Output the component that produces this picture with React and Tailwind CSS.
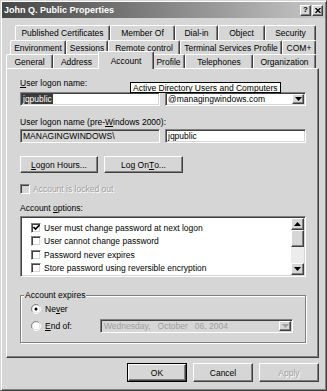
import React from "react";

const raised = "border border-t-white border-l-white border-r-[#404040] border-b-[#404040] shadow-[inset_-1px_-1px_0_#808080]";
const sunken = "border border-t-[#808080] border-l-[#808080] border-r-white border-b-white shadow-[inset_1px_1px_0_#404040,inset_-1px_-1px_0_#d6d6d6]";
const dim = "text-[#a0a0a0] [text-shadow:1px_1px_0_#ffffff]";

const tabRows = [
  {
    cls: "ml-[13px] h-[15px]",
    tabs: [["Published Certificates", "w-[95px]"], ["Member Of", "w-[65px]"], ["Dial-in", "w-[43px]"], ["Object", "w-[47px]"], ["Security", "w-[51px]"]],
  },
  {
    cls: "ml-[8px] h-[14px]",
    tabs: [["Environment", "w-[56px]"], ["Sessions", "w-[42px]"], ["Remote control", "w-[72px]"], ["Terminal Services Profile", "w-[102px]"], ["COM+", "w-[34px]"]],
  },
  {
    cls: "ml-[4px] h-[14px]",
    tabs: [["General", "w-[47px]"], ["Address", "w-[47px]"], ["Account", "w-[56px]"], ["Profile", "w-[33px]"], ["Telephones", "w-[68px]"], ["Organization", "w-[63px]"]],
  },
];

const options = [
  ["User must change password at next logon", true],
  ["User cannot change password", false],
  ["Password never expires", false],
  ["Store password using reversible encryption", false],
];

const U = ({ children }) => <span className="underline underline-offset-[1px]">{children}</span>;

const Arrow = ({ up, color = "#000" }) => (
  <svg width="7" height="4" viewBox="0 0 7 4">
    <path d={up ? "M3.5 0 L7 4 L0 4 Z" : "M0 0 L7 0 L3.5 4 Z"} fill={color} />
  </svg>
);

function Tab({ label, w, active }) {
  if (active) {
    return (
      <div className={`${w} -mx-[2px] -mt-[3px] h-[18px] relative z-10 bg-[#d6d6d6] flex justify-center pt-[4px] border-t border-l border-r border-t-white border-l-white border-r-[#404040] shadow-[inset_-1px_0_0_#808080] rounded-t-[2px]`}>
        {label}
      </div>
    );
  }
  return (
    <div className={`${w} h-full flex items-center justify-center border-t border-l border-r border-t-white border-l-white border-r-[#404040] shadow-[inset_-1px_0_0_#808080] rounded-t-[2px] whitespace-nowrap`}>
      {label}
    </div>
  );
}

function Check({ checked, disabled }) {
  return (
    <div className={`w-[10px] h-[10px] shrink-0 flex items-center justify-center ${sunken} ${disabled ? "bg-[#d6d6d6]" : "bg-white"}`}>
      {checked && (
        <svg width="7" height="7" viewBox="0 0 7 7">
          <path d="M0.5 3 L2.5 5 L6.5 1" stroke="#000" strokeWidth="1.6" fill="none" />
        </svg>
      )}
    </div>
  );
}

function Radio({ on }) {
  return (
    <svg width="10" height="10" viewBox="0 0 10 10" className="shrink-0">
      <path d="M9 2.5 A4.5 4.5 0 0 0 1.8 1.8 A4.5 4.5 0 0 0 2.5 9" stroke="#808080" fill="none" />
      <path d="M1 7.5 A4.5 4.5 0 0 0 8.2 8.2 A4.5 4.5 0 0 0 7.5 1" stroke="#ffffff" fill="none" />
      <circle cx="5" cy="5" r="3.5" fill="#ffffff" />
      {on && <circle cx="5" cy="5" r="1.5" fill="#000" />}
    </svg>
  );
}

export default function App() {
  return (
    <div className="w-[327px] h-[391px] bg-[#d6d6d6] border border-t-[#d6d6d6] border-l-[#d6d6d6] border-r-[#404040] border-b-[#404040] shadow-[inset_1px_1px_0_#ffffff,inset_-1px_-1px_0_#808080] p-[1px] flex flex-col font-['Liberation_Sans',Arial,sans-serif] text-[8.5px] leading-[10px] text-black overflow-hidden">
      {/* title bar */}
      <div className="h-[16px] shrink-0 flex items-center justify-between pl-[2px] pr-[2px] bg-linear-to-r from-[#474747] to-[#c8c8c8]">
        <span className="text-white font-bold text-[9px]">John Q. Public Properties</span>
        <div className="flex gap-[1px]">
          <div className={`w-[11px] h-[11px] bg-[#d6d6d6] flex items-center justify-center font-bold text-[8px] ${raised}`}>?</div>
          <div className={`w-[11px] h-[11px] bg-[#d6d6d6] flex items-center justify-center ${raised}`}>
            <svg width="6" height="5" viewBox="0 0 6 5">
              <path d="M0.5 0 L5.5 5 M5.5 0 L0.5 5" stroke="#000" strokeWidth="1.3" />
            </svg>
          </div>
        </div>
      </div>

      {/* tabs */}
      <div className="mt-[7px] flex flex-col">
        {tabRows.map((row, i) => (
          <div key={i} className={`flex items-start ${row.cls}`}>
            {row.tabs.map(([label, w]) => (
              <Tab key={label} label={label} w={w} active={label === "Account"} />
            ))}
          </div>
        ))}
      </div>

      {/* panel */}
      <div className="relative ml-[4px] w-[313px] h-[290px] shrink-0 border border-t-white border-l-white border-r-[#404040] border-b-[#404040] shadow-[inset_-1px_-1px_0_#808080] pl-[13px] pr-[12px] pt-[9px] flex flex-col">
        <div className="h-[10px]"><U>U</U>ser logon name:</div>
        <div className="mt-[4px] flex h-[14px]">
          <div className={`w-[140px] h-full bg-white flex items-center pl-[1px] ${sunken}`}>
            <span className="bg-[#3a3a3a] text-white px-[1px]">jqpublic</span>
          </div>
          <div className={`ml-[5px] flex-1 h-full bg-white flex items-center ${sunken} p-[1px]`}>
            <span className="flex-1 pl-[1px]">@managingwindows.com</span>
            <div className={`w-[12px] h-full bg-[#d6d6d6] flex items-center justify-center ${raised}`}>
              <Arrow />
            </div>
          </div>
        </div>

        <div className="mt-[11px] h-[10px]">User logon name (pre-<U>W</U>indows 2000):</div>
        <div className="mt-[2px] flex h-[14px]">
          <div className={`w-[140px] h-full bg-[#d6d6d6] flex items-center pl-[2px] ${sunken}`}>MANAGINGWINDOWS\</div>
          <div className={`ml-[5px] flex-1 h-full bg-white flex items-center pl-[2px] ${sunken}`}>jqpublic</div>
        </div>

        <div className="mt-[13px] flex h-[17px]">
          <div className={`w-[78px] h-full flex items-center justify-center ${raised}`}><U>L</U>ogon Hours...</div>
          <div className={`ml-[6px] w-[79px] h-full flex items-center justify-center ${raised}`}>Log On <U>T</U>o...</div>
        </div>

        <div className="mt-[11px] h-[10px] flex items-center gap-[3px]">
          <Check disabled />
          <span className={dim}>Account is locked out</span>
        </div>

        <div className="mt-[9px] h-[10px]">Account <U>o</U>ptions:</div>
        <div className={`mt-[3px] h-[61px] bg-white flex p-[1px] ${sunken}`}>
          <div className="flex-1 pt-[3px] pl-[9px] flex flex-col">
            {options.map(([label, checked]) => (
              <div key={label} className="h-[14.5px] flex items-center gap-[3px]">
                <Check checked={checked} />
                <span>{label}</span>
              </div>
            ))}
          </div>
          <div className="w-[13px] h-full flex flex-col bg-[#ececec]">
            <div className={`h-[12px] bg-[#d6d6d6] flex items-center justify-center ${raised}`}><Arrow up /></div>
            <div className={`h-[17px] bg-[#d6d6d6] ${raised}`} />
            <div className="flex-1" />
            <div className={`h-[12px] bg-[#d6d6d6] flex items-center justify-center ${raised}`}><Arrow /></div>
          </div>
        </div>

        <div className="relative mt-[18px] h-[48px] border border-[#808080] shadow-[inset_1px_1px_0_#ffffff,1px_1px_0_#ffffff] pl-[10px] pr-[12px] pt-[8px] flex flex-col">
          <span className="absolute -top-[6px] left-[3px] px-[1px] bg-[#d6d6d6]">Account expires</span>
          <div className="h-[10px] flex items-center gap-[4px]">
            <Radio on />
            <span>Ne<U>v</U>er</span>
          </div>
          <div className="mt-[5px] h-[14px] flex items-center">
            <Radio />
            <span className="ml-[4px]"><U>E</U>nd of:</span>
            <div className={`ml-auto w-[193px] h-full bg-[#d6d6d6] flex items-center p-[1px] ${sunken}`}>
              <span className="flex-1 pl-[2px] whitespace-pre text-[#a0a0a0]">Wednesday,   October   06, 2004</span>
              <div className={`w-[12px] h-full flex items-center justify-center ${raised}`}>
                <Arrow color="#a0a0a0" />
              </div>
            </div>
          </div>
        </div>

        <div className="absolute left-[123px] top-[13px] h-[11px] px-[2px] flex items-center border border-black bg-[#fbfbf8] whitespace-nowrap">
          Active Directory Users and Computers
        </div>
      </div>

      {/* dialog buttons */}
      <div className="mt-[5px] h-[19px] flex justify-end gap-[6px] pr-[6px]">
        <div className="w-[60px] h-full border border-black">
          <div className={`w-full h-full flex items-center justify-center ${raised}`}>OK</div>
        </div>
        <div className={`w-[60px] h-full flex items-center justify-center ${raised}`}>Cancel</div>
        <div className={`w-[60px] h-full flex items-center justify-center ${raised}`}>
          <span className={dim}>Apply</span>
        </div>
      </div>
    </div>
  );
}
